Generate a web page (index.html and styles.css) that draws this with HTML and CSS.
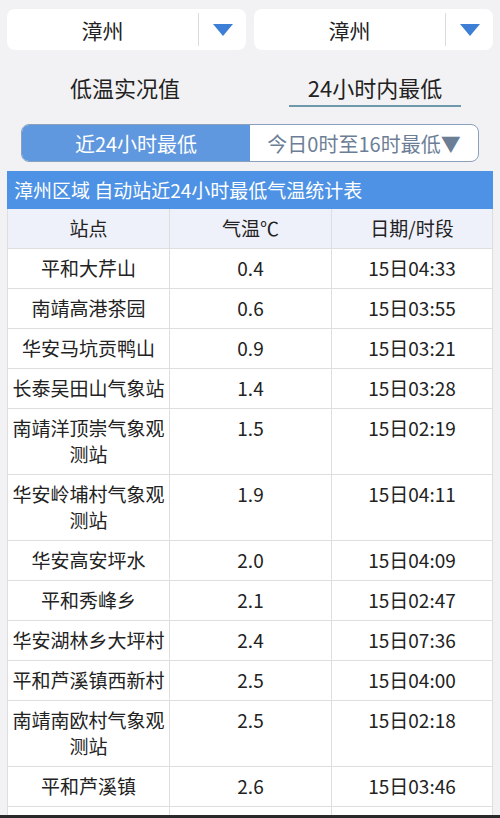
FILE: index.html
```html
<!DOCTYPE html>
<html lang="zh">
<head>
<meta charset="utf-8">
<link rel="stylesheet" href="styles.css">
</head>
<body>
<div class="page">
  <div class="selects">
    <div class="select"><span class="sel-text">漳州</span><span class="sel-arrow"><i class="tri"></i></span></div>
    <div class="select"><span class="sel-text">漳州</span><span class="sel-arrow"><i class="tri"></i></span></div>
  </div>
  <div class="tabs">
    <div class="tab">低温实况值</div>
    <div class="tab"><span class="tab-active">24小时内最低</span></div>
  </div>
  <div class="seg">
    <div class="seg-item seg-on">近24小时最低</div>
    <div class="seg-item">今日0时至16时最低▼</div>
  </div>
  <div class="table">
    <div class="caption">漳州区域 自动站近24小时最低气温统计表</div>
    <div class="row head"><div>站点</div><div>气温℃</div><div>日期/时段</div></div>
    <div class="row"><div>平和大芹山</div><div>0.4</div><div>15日04:33</div></div>
    <div class="row"><div>南靖高港茶园</div><div>0.6</div><div>15日03:55</div></div>
    <div class="row"><div>华安马坑贡鸭山</div><div>0.9</div><div>15日03:21</div></div>
    <div class="row"><div>长泰吴田山气象站</div><div>1.4</div><div>15日03:28</div></div>
    <div class="row"><div>南靖洋顶崇气象观测站</div><div>1.5</div><div>15日02:19</div></div>
    <div class="row"><div>华安岭埔村气象观测站</div><div>1.9</div><div>15日04:11</div></div>
    <div class="row"><div>华安高安坪水</div><div>2.0</div><div>15日04:09</div></div>
    <div class="row"><div>平和秀峰乡</div><div>2.1</div><div>15日02:47</div></div>
    <div class="row"><div>华安湖林乡大坪村</div><div>2.4</div><div>15日07:36</div></div>
    <div class="row"><div>平和芦溪镇西新村</div><div>2.5</div><div>15日04:00</div></div>
    <div class="row"><div>南靖南欧村气象观测站</div><div>2.5</div><div>15日02:18</div></div>
    <div class="row"><div>平和芦溪镇</div><div>2.6</div><div>15日03:46</div></div>
    <div class="row"><div>&nbsp;</div><div>&nbsp;</div><div>&nbsp;</div></div>
  </div>
</div>
<div class="edge"></div>
</body>
</html>
```
FILE: styles.css
```css
* { box-sizing: border-box; }
html, body { margin: 0; padding: 0; }
body {
  background: #f2f2f4;
  font-family: "Noto Sans CJK SC", "Noto Sans", sans-serif;
  color: #222;
  width: 500px;
  height: 818px;
  overflow: hidden;
}
.page { padding: 9px 7px 0 7px; }
.selects { display: flex; gap: 8px; }
.select {
  flex: 1;
  height: 41px;
  background: #fff;
  border-radius: 8px;
  display: flex;
  align-items: center;
}
.sel-text {
  flex: 1;
  text-align: center;
  font-size: 21px;
  color: #222;
}
.sel-arrow {
  width: 48px;
  height: 33px;
  border-left: 1px solid #dcdcdc;
  display: flex;
  align-items: center;
  justify-content: center;
}
.tri {
  width: 0; height: 0;
  border-left: 10px solid transparent;
  border-right: 10px solid transparent;
  border-top: 12px solid #3d7fd6;
}
.tabs { display: flex; height: 64px; margin: 0 -7px; }
.tab {
  flex: 1;
  display: flex;
  justify-content: center;
  align-items: flex-start;
  font-size: 22px;
  color: #222;
  padding-top: 22px;
  line-height: 30px;
}
.tab-active {
  display: inline-block;
  padding: 0 19px 3px 19px;
  border-bottom: 2px solid #6e99aa;
}
.seg {
  display: flex;
  margin: 10px 14px 0 14px;
  height: 38px;
  border: 1px solid #8aa0bd;
  border-radius: 8px;
  overflow: hidden;
  background: #fff;
}
.seg-item {
  flex: 1;
  display: flex;
  align-items: center;
  justify-content: center;
  font-size: 20px;
  color: #6c7e96;
}
.seg-on { background: #5f98de; color: #fff; }
.table {
  margin-top: 9px;
  background: #fff;
}
.caption {
  background: #4d92e4;
  color: #fff;
  font-size: 19px;
  height: 38px;
  line-height: 38px;
  padding-left: 7px;
}
.row {
  display: grid;
  grid-template-columns: 162px 162px 162px;
  border-bottom: 1px solid #dedede;
}
.row > div {
  padding: 6px 3px 7px 3px;
  line-height: 26px;
  font-size: 19px;
  text-align: center;
  border-left: 1px solid #dedede;
}
.row > div:last-child { border-right: 1px solid #dedede; }
.row.head { background: #eef0fa; }
.edge {
  position: fixed;
  left: 0; right: 0; bottom: 0;
  height: 3px;
  background: #2a2a2a;
}
```
